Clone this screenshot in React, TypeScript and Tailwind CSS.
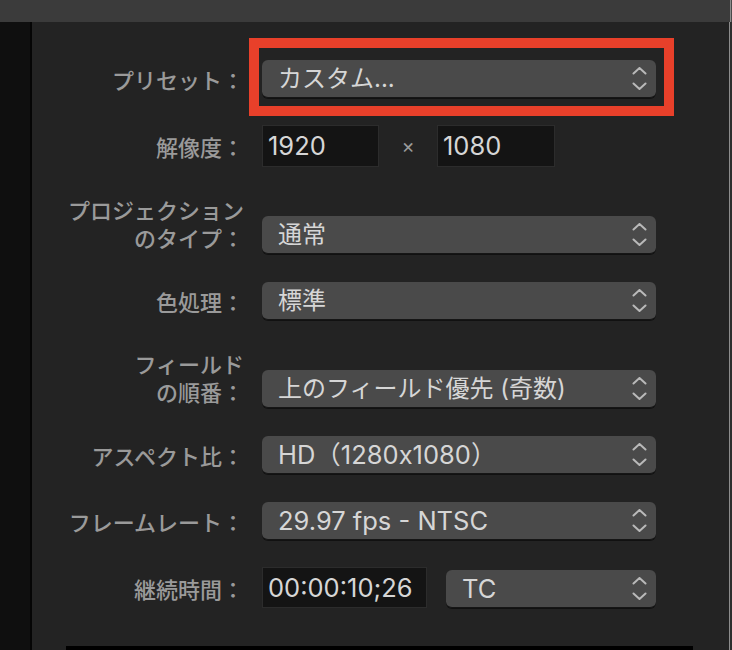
import React from "react";

const labelFont = { fontFamily: '"Noto Sans CJK JP", "Noto Sans", sans-serif' };
const valueFont = { fontFamily: 'Inter, "Noto Sans CJK JP", sans-serif' };

function Chevrons() {
  return (
    <svg width="15" height="23" viewBox="0 0 15 23" fill="none" className="shrink-0">
      <polyline points="1.5,6.5 7.5,1 13.5,6.5" stroke="#b9b9b9" strokeWidth="2" strokeLinecap="round" strokeLinejoin="round" />
      <polyline points="1.5,16.5 7.5,22 13.5,16.5" stroke="#b9b9b9" strokeWidth="2" strokeLinecap="round" strokeLinejoin="round" />
    </svg>
  );
}

function Value({ value, latin }: { value: string; latin?: boolean }) {
  return (
    <span
      className={`${latin ? "text-[25.5px]" : "text-[24px]"} leading-none text-[#d6d6d6] whitespace-nowrap`}
      style={valueFont}
    >
      {value}
    </span>
  );
}

function Select({ value, latin, className = "w-[394px]" }: { value: string; latin?: boolean; className?: string }) {
  return (
    <div
      className={`${className} h-[38px] rounded-[6px] bg-[#4a4a4a] border-b border-[#161616] shadow-[0_1px_0_rgba(0,0,0,0.5)] flex items-center justify-between pl-[16px] pr-[9px]`}
    >
      <Value value={value} latin={latin} />
      <Chevrons />
    </div>
  );
}

function Field({ value, className }: { value: string; className: string }) {
  return (
    <div className={`${className} bg-[#141414] border border-[#2c2c2c] flex items-center pl-[5px]`}>
      <Value value={value} latin />
    </div>
  );
}

function Label({ lines, two }: { lines: string[]; two?: boolean }) {
  return (
    <div
      className={`w-[212px] shrink-0 text-right text-[22px] leading-[28px] font-medium text-[#9a9a9a] ${two ? "mb-[3px]" : ""}`}
      style={labelFont}
    >
      {lines.map((l, i) => (
        <div key={i} className="whitespace-nowrap">
          {l}
        </div>
      ))}
    </div>
  );
}

function Row({
  label,
  children,
  className = "",
  end,
}: {
  label: string[];
  children: React.ReactNode;
  className?: string;
  end?: boolean;
}) {
  return (
    <div className={`flex ${end ? "items-end" : "items-center"} ${className}`}>
      <Label lines={label} two={end} />
      <div className={`ml-[18px] flex ${end ? "items-end" : "items-center"}`}>{children}</div>
    </div>
  );
}

export default function App() {
  return (
    <div className="w-[732px] h-[650px] bg-[#232323] flex flex-col overflow-hidden">
      <div className="h-[22px] flex shrink-0">
        <div className="w-[730px] bg-[#3b3b3b]" />
        <div className="w-px bg-[#8c8c8c]" />
        <div className="flex-1 bg-[#4a4a4a]" />
      </div>
      <div className="flex flex-1">
        <div className="w-[30px] bg-[#0f0f0f]" />
        <div className="w-[2px] bg-[#050505]" />
        <div className="w-[697px] flex flex-col pt-[38px]">
          <Row label={["プリセット："]}>
            <div className="relative">
              <Select value="カスタム..." />
              <div className="absolute -left-[13px] -top-[22px] -right-[18px] -bottom-[18px] border-[10px] border-[#e8402a] pointer-events-none" />
            </div>
          </Row>

          <Row label={["解像度："]} className="mt-[27px]">
            <Field value="1920" className="w-[117px] h-[42px]" />
            <span className="w-[58px] text-center text-[20px] leading-none text-[#9a9a9a]" style={valueFont}>
              ×
            </span>
            <Field value="1080" className="w-[118px] h-[42px]" />
          </Row>

          <Row label={["プロジェクション", "のタイプ："]} className="mt-[28px]" end>
            <Select value="通常" />
          </Row>

          <Row label={["色処理："]} className="mt-[28px]">
            <Select value="標準" />
          </Row>

          <Row label={["フィールド", "の順番："]} className="mt-[29px]" end>
            <Select value="上のフィールド優先 (奇数)" />
          </Row>

          <Row label={["アスペクト比："]} className="mt-[28px]">
            <Select value="HD（1280x1080）" latin />
          </Row>

          <Row label={["フレームレート："]} className="mt-[28px]">
            <Select value="29.97 fps - NTSC" latin />
          </Row>

          <Row label={["継続時間："]} className="mt-[27px]">
            <Field value="00:00:10;26" className="w-[165px] h-[41px]" />
            <div className="ml-[19px] mt-[3px]">
              <Select value="TC" latin className="w-[210px]" />
            </div>
          </Row>

          <div className="mt-[38px] ml-[34px] w-[627px] h-[10px] bg-black shrink-0" />
        </div>
        <div className="w-px bg-[#8c8c8c]" />
        <div className="flex-1 bg-[#2e2e2e]" />
      </div>
    </div>
  );
}
